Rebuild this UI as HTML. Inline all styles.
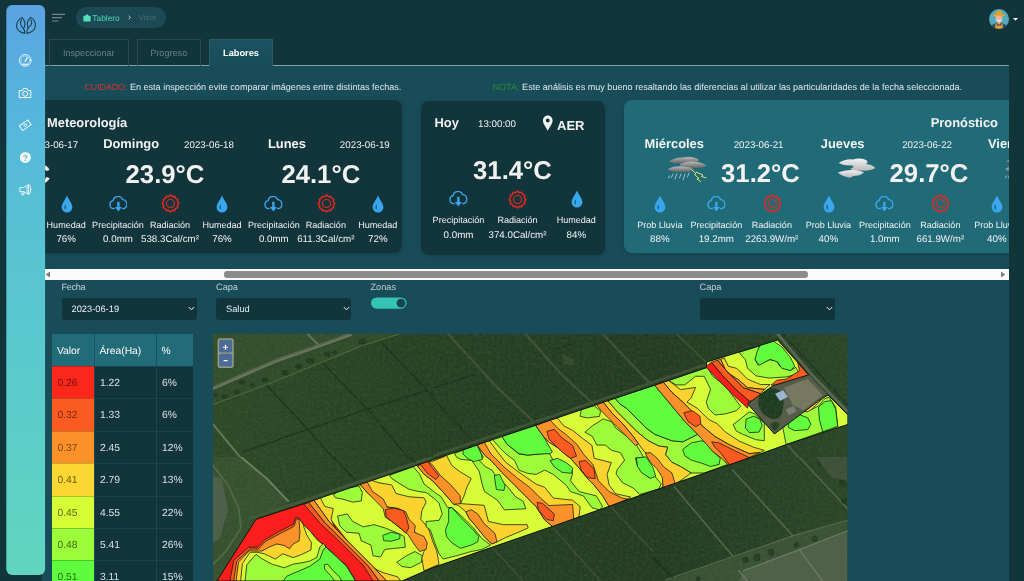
<!DOCTYPE html>
<html lang="es"><head><meta charset="utf-8"><title>Visor</title>
<style>
*{box-sizing:border-box;margin:0;padding:0}
html,body{width:1024px;height:581px;overflow:hidden}
body{background:#12353b;font-family:"Liberation Sans",sans-serif;color:#fff;position:relative;text-rendering:geometricPrecision}
#root{position:absolute;left:0;top:0;width:1024px;height:581px;overflow:hidden;will-change:transform}
.abs{position:absolute}
.t{position:absolute;white-space:nowrap;line-height:1;transform:translate(-50%,-50%)}
.tl{position:absolute;white-space:nowrap;line-height:1;transform:translate(0,-50%)}
.tr{position:absolute;white-space:nowrap;line-height:1;transform:translate(-100%,-50%)}
#side{left:0;top:0;z-index:20}
#panel{left:42px;top:66px;width:967px;height:520px;background:#184c59;overflow:hidden}
#panelline{left:45px;top:65px;width:964px;height:1px;background:linear-gradient(90deg,#86a1a4 0,#86a1a4 164px,transparent 164px,transparent 228px,#86a1a4 228px)}
.tab{top:39px;height:27px;border:1px solid #2b4a4e;border-bottom:none;font-size:9.15px;color:#668084}
.tab.on{background:linear-gradient(180deg,#1b5260,#184c59);border-color:#2c5b66;color:#fff;font-weight:bold;height:27px}
#crumb{left:76px;top:7px;width:90px;height:21px;border-radius:11px;background:#1b4a55}
.card{border-radius:8px;background:#12353b;overflow:hidden;box-shadow:0 1px 5px rgba(0,0,0,.16)}
.b{font-weight:bold}
.day{font-size:12.9px;font-weight:bold}
.date{font-size:9.75px}
.temp{font-size:25.7px;font-weight:bold}
.lab{font-size:9.05px}
.val{font-size:9.75px}
.wx{color:#f2f2f2}
.sel{height:22px;border-radius:3px;background:#12353b;font-size:9.3px;color:#e8eef0}
.flab{font-size:9.2px;color:#c3d0d3}
.th{background:#226b78}
.cell{font-size:10.3px;color:#d6e0e3}
</style></head>
<body>
<svg width="0" height="0" style="position:absolute">
<defs>
<symbol id="i-drop" viewBox="0 0 12 18">
<path d="M6 0.2 C7.2 4 11.4 8.2 11.4 12.2 A5.4 5.4 0 0 1 0.6 12.2 C0.6 8.2 4.8 4 6 0.2Z" fill="#3aa6ee"/>
<path d="M4.6 9.2 C3.2 11 2.9 13.6 4.4 14.6 C5 13 5 11 4.6 9.2Z" fill="#184c59" opacity=".85"/>
</symbol>
<symbol id="i-cloud" viewBox="0 0 20 17">
<path d="M5.7 13.5 H5.2 A4.3 4.3 0 0 1 4.4 5 A5.3 5.3 0 0 1 14.6 3.9 A4.9 4.9 0 0 1 15.4 13.5 H14.5" fill="none" stroke="#3aa6ee" stroke-width="1.4" stroke-linecap="round"/>
<path d="M10 6.2 V12.6" stroke="#3aa6ee" stroke-width="2.5" fill="none"/>
<path d="M6.2 11.7 H13.8 L10 16.6Z" fill="#3aa6ee"/>
</symbol>
<symbol id="i-sun" viewBox="-10 -10 20 20">
<path d="M0 -8.8 L2 -7.2 L4.4 -7.6 L5.4 -5.4 L7.6 -4.4 L7.2 -2 L8.8 0 L7.2 2 L7.6 4.4 L5.4 5.4 L4.4 7.6 L2 7.2 L0 8.8 L-2 7.2 L-4.4 7.6 L-5.4 5.4 L-7.6 4.4 L-7.2 2 L-8.8 0 L-7.2 -2 L-7.6 -4.4 L-5.4 -5.4 L-4.4 -7.6 L-2 -7.2Z" fill="none" stroke="#e5281f" stroke-width="1.6" stroke-linejoin="round"/>
<circle r="4.2" fill="none" stroke="#e5281f" stroke-width="1.15"/>
</symbol>
</defs>
</svg>

<div id="root">
<svg class="abs" id="side" width="50" height="581"><defs><linearGradient id="sg" x1="0" y1="0" x2="0" y2="1"><stop offset="0" stop-color="#5ba2e3"/><stop offset=".12" stop-color="#57b0de"/><stop offset=".25" stop-color="#56bad9"/><stop offset=".45" stop-color="#58c4d2"/><stop offset=".7" stop-color="#5bccca"/><stop offset="1" stop-color="#60d6c0"/></linearGradient></defs><rect x="6.3" y="5" width="38.8" height="570" rx="6" fill="url(#sg)"/></svg>
<svg class="abs" style="left:6px;top:5px;z-index:21" width="40" height="200" viewBox="6 5 40 200" fill="none" stroke="#f4fbfd" stroke-width="1" stroke-linecap="round" stroke-linejoin="round">
<g stroke="#1c4450" stroke-width="1.1">
<path d="M22 17.4 C18.2 19.6 16.2 23 16.6 26.6 C17 30 20 32.4 24.8 33.4 C24.9 31.6 24.6 30 23.6 28.8 C25.6 25 25 20.6 22 17.4Z"/>
<path d="M21.4 19.8 C19.8 22.6 20.4 26 23.6 28.8"/>
<path d="M30.8 17.4 C34.8 19.8 35.8 23.4 35.2 26.6 C34.6 30 31.6 32.4 26.8 33.4 C26.7 31.6 27 29.4 28.2 27.8 C26.6 24.4 27.6 20.2 30.8 17.4Z"/>
<path d="M31 19.8 C32.4 22.6 31.6 25.6 28.2 27.8"/>
</g>
<g stroke-width=".9">
<circle cx="25.2" cy="60.4" r="5.9"/>
<circle cx="25.2" cy="60.4" r="4.4" stroke-dasharray="0.7 1.6" stroke-width=".8"/>
<path d="M25 61.4 L27.4 57.6" stroke-width="1.1"/>
<path d="M22.6 64.2 H27.8" stroke-width="1"/>
</g>
<g stroke-width="1">
<path d="M19.6 90.6 H22.4 L23.4 88.6 H27 L28 90.6 H30.8 V97.6 H19.6Z"/>
<circle cx="25.2" cy="93.8" r="2.5"/>
</g>
<g stroke-width="1" transform="translate(25.2 125.3) rotate(-35)">
<path d="M-5.2 -2.8 H5.2 V2.8 H-5.2Z"/>
<circle cx="0" cy="0" r="1.3" stroke-width=".8"/>
</g>
<circle cx="25.3" cy="157.4" r="5.5" fill="#f4f8fa" stroke="none"/>
<g stroke-width=".85">
<path d="M20.2 187.6 H23.4 L28.6 184.6 V194.4 L23.4 191.6 H20.2Z"/>
<ellipse cx="28.8" cy="189.5" rx="1.9" ry="4.9"/>
<path d="M21.8 191.8 V195 H23.8 V191.8"/>
</g>
</svg>
<div class="t" style="left:25.4px;top:157.6px;z-index:22;font-size:8.5px;font-weight:bold;color:#5cb9d8">?</div>

<svg class="abs" style="left:50px;top:10px" width="18" height="14" viewBox="50 10 18 14"><path d="M52 14.3 H65 M52 17.65 H62 M52 21 H58.6" stroke="#74868a" stroke-width="1.15" fill="none"/></svg>
<div class="abs" id="crumb"></div>
<svg class="abs" style="left:82.5px;top:13.5px" width="8" height="8" viewBox="0 0 8 8"><path d="M2.6 1.8 V1.2 A.8 .8 0 0 1 3.4 .4 H4.6 A.8 .8 0 0 1 5.4 1.2 V1.8 H6.6 A1.1 1.1 0 0 1 7.7 2.9 V6.4 A1.1 1.1 0 0 1 6.6 7.5 H1.4 A1.1 1.1 0 0 1 .3 6.4 V2.9 A1.1 1.1 0 0 1 1.4 1.8Z" fill="#52e0b8"/></svg>
<div class="tl" style="left:92.3px;top:17.7px;font-size:8.4px;color:#4fd9b3">Tablero</div>
<svg class="abs" style="left:126.5px;top:14px" width="5" height="7" viewBox="0 0 5 7"><path d="M1.6 1.7 L3.4 3.5 L1.6 5.3" fill="none" stroke="#cfdadc" stroke-width=".9"/></svg>
<div class="tl" style="left:138.6px;top:17.7px;font-size:7.9px;color:#4e6a6e">Visor</div>
<svg class="abs" style="left:989px;top:9px" width="20" height="20" viewBox="0 0 20 20">
<defs><clipPath id="av"><circle cx="10" cy="10" r="10"/></clipPath></defs>
<g clip-path="url(#av)">
<rect width="20" height="20" fill="#55a9bd"/>
<path d="M2 20 C2 15.5 5 14 10 14 C15 14 18 15.5 18 20Z" fill="#2d4a63"/>
<path d="M6.2 14.6 V20 H13.8 V14.6 H12.4 V16.6 H7.6 V14.6Z" fill="#dca032"/>
<rect x="8.6" y="11" width="2.8" height="4.4" fill="#f0a57e"/>
<ellipse cx="10" cy="8.6" rx="3.4" ry="4" fill="#f3b08c"/>
<path d="M6.8 9 C7 12.4 8.4 13 10 13 C11.600 13 13 12.4 13.2 9 C12.6 10.800 11.600 11.200 10 11.200 C8.400 11.200 7.400 10.800 6.800 9Z" fill="#e8e4e0"/>
<path d="M3.6 6.200 C5.400 4.600 7 5.400 7.600 2.600 C8 1 12 1 12.400 2.600 C13 5.400 14.600 4.600 16.400 6.200 C15 7.600 12.400 6.800 10 6.800 C7.600 6.800 5 7.600 3.600 6.200Z" fill="#e0a236"/>
</g></svg>
<svg class="abs" style="left:1012.5px;top:17.5px" width="5" height="3" viewBox="0 0 5 3"><path d="M0 0 H5 L2.500 2.800Z" fill="#f4f6f7"/></svg>

<div class="abs" id="panel"></div><div class="abs" id="panelline"></div>
<div class="abs tab" style="left:49px;width:79.5px"><div class="t" style="left:50%;top:13.6px">Inspeccionar</div></div>
<div class="abs tab" style="left:136.5px;width:64.5px"><div class="t" style="left:50%;top:13.6px">Progreso</div></div>
<div class="abs tab on" style="left:209px;width:64px"><div class="t" style="left:50%;top:13.6px;font-size:9.250px">Labores</div></div>

<div class="abs" id="wxwrap" style="left:45px;top:66px;width:964px;height:200px;overflow:hidden"><div class="abs" style="left:-45px;top:-66px;width:1200px;height:300px"><div class="abs card" style="left:-60px;top:100px;width:462px;height:153px"></div><div class="tl day wx" style="left:47px;top:122.8px">Meteorología</div><div class="t day wx" style="left:-24.699999999999996px;top:143.75px">Sábado</div><div class="t date wx" style="left:53.2px;top:146.4px">2023-06-17</div><div class="t temp wx" style="left:10.800000000000002px;top:176.4px">23.5°C</div><svg class="abs" style="left:-47.199999999999996px;top:195.9px" width="18.8" height="16"><use href="#i-cloud"/></svg><div class="t lab wx" style="left:-37.8px;top:226.3px">Precipitación</div><div class="t val wx" style="left:-37.8px;top:239.5px">0.0mm</div><svg class="abs" style="left:4.900000000000002px;top:194.3px" width="19" height="19"><use href="#i-sun"/></svg><div class="t lab wx" style="left:14.200000000000003px;top:226.3px">Radiación</div><div class="t val wx" style="left:14.200000000000003px;top:239.5px">512.4Cal/cm²</div><svg class="abs" style="left:60.5px;top:194.6px" width="12" height="18"><use href="#i-drop"/></svg><div class="t lab wx" style="left:66.2px;top:226.3px">Humedad</div><div class="t val wx" style="left:66.2px;top:239.5px">76%</div><div class="t day wx" style="left:131.1px;top:143.75px">Domingo</div><div class="t date wx" style="left:209.0px;top:146.4px">2023-06-18</div><div class="t temp wx" style="left:165.0px;top:176.4px">23.9°C</div><svg class="abs" style="left:108.6px;top:195.9px" width="18.8" height="16"><use href="#i-cloud"/></svg><div class="t lab wx" style="left:118.0px;top:226.3px">Precipitación</div><div class="t val wx" style="left:118.0px;top:239.5px">0.0mm</div><svg class="abs" style="left:160.7px;top:194.3px" width="19" height="19"><use href="#i-sun"/></svg><div class="t lab wx" style="left:170.0px;top:226.3px">Radiación</div><div class="t val wx" style="left:170.0px;top:239.5px">538.3Cal/cm²</div><svg class="abs" style="left:216.3px;top:194.6px" width="12" height="18"><use href="#i-drop"/></svg><div class="t lab wx" style="left:222.0px;top:226.3px">Humedad</div><div class="t val wx" style="left:222.0px;top:239.5px">76%</div><div class="t day wx" style="left:286.90000000000003px;top:143.75px">Lunes</div><div class="t date wx" style="left:364.8px;top:146.4px">2023-06-19</div><div class="t temp wx" style="left:320.8px;top:176.4px">24.1°C</div><svg class="abs" style="left:264.40000000000003px;top:195.9px" width="18.8" height="16"><use href="#i-cloud"/></svg><div class="t lab wx" style="left:273.8px;top:226.3px">Precipitación</div><div class="t val wx" style="left:273.8px;top:239.5px">0.0mm</div><svg class="abs" style="left:316.5px;top:194.3px" width="19" height="19"><use href="#i-sun"/></svg><div class="t lab wx" style="left:325.8px;top:226.3px">Radiación</div><div class="t val wx" style="left:325.8px;top:239.5px">611.3Cal/cm²</div><svg class="abs" style="left:372.1px;top:194.6px" width="12" height="18"><use href="#i-drop"/></svg><div class="t lab wx" style="left:377.8px;top:226.3px">Humedad</div><div class="t val wx" style="left:377.8px;top:239.5px">72%</div><div class="abs card" style="left:421px;top:100.5px;width:184px;height:154.5px"></div><div class="tl day wx" style="left:434.5px;top:123px">Hoy</div><div class="tl date wx" style="left:478px;top:124.9px">13:00:00</div><svg class="abs" style="left:542.3px;top:115px" width="11.5" height="16.5" viewBox="0 0 11 16"><path d="M5.5 0.6 A4.7 4.7 0 0 1 10.2 5.3 C10.2 8.6 6.6 12.6 5.5 15.2 C4.4 12.6 0.8 8.6 0.8 5.3 A4.7 4.7 0 0 1 5.5 0.6Z M5.5 3.4 A1.9 1.9 0 0 0 5.5 7.2 A1.9 1.9 0 0 0 5.5 3.4Z" fill="#f2f2f2" fill-rule="evenodd"/></svg><div class="tl day wx" style="left:557px;top:125.1px;font-size:13px">AER</div><div class="t temp wx" style="left:512.5px;top:172.3px">31.4°C</div><svg class="abs" style="left:449.1px;top:191.4px" width="18.8" height="16"><use href="#i-cloud"/></svg><div class="t lab wx" style="left:458.5px;top:220.8px">Precipitación</div><div class="t val wx" style="left:458.5px;top:236.0px">0.0mm</div><svg class="abs" style="left:508.2px;top:189.8px" width="19" height="19"><use href="#i-sun"/></svg><div class="t lab wx" style="left:517.5px;top:220.8px">Radiación</div><div class="t val wx" style="left:517.5px;top:236.0px">374.0Cal/cm²</div><svg class="abs" style="left:570.5999999999999px;top:190.1px" width="12" height="18"><use href="#i-drop"/></svg><div class="t lab wx" style="left:576.3px;top:220.8px">Humedad</div><div class="t val wx" style="left:576.3px;top:236.0px">84%</div><div class="abs card" style="left:624px;top:100px;width:500px;height:153px;background:#216b78"></div><div class="tr day wx" style="left:998px;top:123px">Pronóstico</div><svg class="abs" style="left:664px;top:152px" width="48" height="34" viewBox="664 152 48 34">
<defs><filter id="wb" x="-20%" y="-20%" width="140%" height="140%"><feGaussianBlur stdDeviation=".7"/></filter>
<linearGradient id="gc" x1="0" y1="0" x2="0" y2="1"><stop offset="0" stop-color="#b9b9b9"/><stop offset="1" stop-color="#5f6264"/></linearGradient>
<linearGradient id="wc" x1="0" y1="0" x2="0" y2="1"><stop offset="0" stop-color="#f2f2f2"/><stop offset="1" stop-color="#b9b9b9"/></linearGradient></defs>
<g filter="url(#wb)" id="storm">
<path d="M669 161.5 Q676 157 683 157.5 Q690 155.5 697 158.5 Q700 160 698 162 Q690 164.5 682 163.5 Q674 164 669 161.5Z" fill="url(#gc)"/>
<path d="M680 164 Q688 160.5 697 162 Q703 162.5 706.5 165.5 Q703 168.5 694 168 Q685 168.5 680 166Z" fill="url(#gc)"/>
<path d="M668.5 168.5 Q675 165.5 684 166.5 Q691 167 694 169.5 Q690 172.5 681 172 Q673 172.5 668.5 170Z" fill="url(#gc)"/>
<g stroke="#c6d8e6" stroke-width=".9" stroke-linecap="round" opacity=".85"><path d="M673 174 L671.5 177.5 M677 173.5 L675 179 M681 174 L679.5 178 M685 174 L683 180 M689 173 L687.5 177 M669.5 176 L668.5 178"/></g>
<path d="M692 170 L696 173.5 L694.5 174.5 L699 178.5 L697 179 L701 182 M696 172 L703 175 L701.5 176.5 L706.5 178" stroke="#e6e070" stroke-width="1" fill="none" stroke-linejoin="round"/>
</g>
</svg>
<svg class="abs" style="left:833px;top:153px" width="48" height="30" viewBox="833 153 48 30">
<g filter="url(#wb)">
<path d="M838.5 163 Q846 158.5 853 159.5 Q860 157.5 866 160 Q869 162 866 164 Q872 164.5 875.5 168 Q870 171.5 862 170.5 Q855 171.5 850 169 Q856 166.5 852 165.5 Q844 166 838.5 163Z" fill="url(#wc)"/>
<path d="M838 172.5 Q845 169.5 853 170 Q860 170.5 864 172.5 Q860 176 853 176 Q851 178.5 847 177 Q841 175.5 838 172.5Z" fill="url(#wc)"/>
</g>
</svg>
<svg class="abs" style="left:1001px;top:152px" width="48" height="34" viewBox="664 152 48 34"><use href="#storm"/></svg>
<div class="t day wx" style="left:674.2px;top:143.5px">Miércoles</div><div class="tr date wx" style="left:783.5px;top:145.7px">2023-06-21</div><div class="t temp wx" style="left:760.5px;top:174.6px">31.2°C</div><svg class="abs" style="left:654.0999999999999px;top:194.6px" width="12" height="18"><use href="#i-drop"/></svg><div class="t lab wx" style="left:659.8px;top:226.3px">Prob Lluvia</div><div class="t val wx" style="left:659.8px;top:239.5px">88%</div><svg class="abs" style="left:706.9px;top:195.9px" width="18.8" height="16"><use href="#i-cloud"/></svg><div class="t lab wx" style="left:716.3px;top:226.3px">Precipitación</div><div class="t val wx" style="left:716.3px;top:239.5px">19.2mm</div><svg class="abs" style="left:762.5px;top:194.3px" width="19" height="19"><use href="#i-sun"/></svg><div class="t lab wx" style="left:771.8px;top:226.3px">Radiación</div><div class="t val wx" style="left:771.8px;top:239.5px">2263.9W/m²</div><div class="t day wx" style="left:842.7px;top:143.5px">Jueves</div><div class="tr date wx" style="left:952.0px;top:145.7px">2023-06-22</div><div class="t temp wx" style="left:929.0px;top:174.6px">29.7°C</div><svg class="abs" style="left:822.5999999999999px;top:194.6px" width="12" height="18"><use href="#i-drop"/></svg><div class="t lab wx" style="left:828.3px;top:226.3px">Prob Lluvia</div><div class="t val wx" style="left:828.3px;top:239.5px">40%</div><svg class="abs" style="left:875.4px;top:195.9px" width="18.8" height="16"><use href="#i-cloud"/></svg><div class="t lab wx" style="left:884.8px;top:226.3px">Precipitación</div><div class="t val wx" style="left:884.8px;top:239.5px">1.0mm</div><svg class="abs" style="left:931.0px;top:194.3px" width="19" height="19"><use href="#i-sun"/></svg><div class="t lab wx" style="left:940.3px;top:226.3px">Radiación</div><div class="t val wx" style="left:940.3px;top:239.5px">661.9W/m²</div><div class="t day wx" style="left:1011.2px;top:143.5px">Viernes</div><div class="tr date wx" style="left:1120.5px;top:145.7px">2023-06-23</div><div class="t temp wx" style="left:1097.5px;top:174.6px">28.4°C</div><svg class="abs" style="left:991.0999999999999px;top:194.6px" width="12" height="18"><use href="#i-drop"/></svg><div class="t lab wx" style="left:996.8px;top:226.3px">Prob Lluvia</div><div class="t val wx" style="left:996.8px;top:239.5px">40%</div><svg class="abs" style="left:1043.8999999999999px;top:195.9px" width="18.8" height="16"><use href="#i-cloud"/></svg><div class="t lab wx" style="left:1053.3px;top:226.3px">Precipitación</div><div class="t val wx" style="left:1053.3px;top:239.5px">0.5mm</div><svg class="abs" style="left:1099.5px;top:194.3px" width="19" height="19"><use href="#i-sun"/></svg><div class="t lab wx" style="left:1108.8px;top:226.3px">Radiación</div><div class="t val wx" style="left:1108.8px;top:239.5px">702.1W/m²</div></div></div>
<div class="tl note" style="left:84.5px;top:88.4px;font-size:9.080px;color:#dfe8ea"><span style="color:#d9342c;font-size:8.77px">CUIDADO:</span> En esta inspección evite comparar imágenes entre distintas fechas.</div>
<div class="tl note" style="left:492.5px;top:88.4px;font-size:9.080px;color:#dfe8ea"><span style="color:#2b8c31">NOTA:</span> Este análisis es muy bueno resaltando las diferencias al utilizar las particularidades de la fecha seleccionada.</div>

<div class="abs" style="left:45px;top:269px;width:964px;height:11px;background:#fafafa"></div>
<div class="abs" style="left:224px;top:271px;width:584px;height:6.5px;border-radius:3.2px;background:#8b8b8b"></div>
<svg class="abs" style="left:45px;top:270.5px" width="6" height="7" viewBox="0 0 6 7"><path d="M5 0.500 V6.500 L0.800 3.500Z" fill="#7b7b7b"/></svg>
<svg class="abs" style="left:999.5px;top:270.5px" width="6" height="7" viewBox="0 0 6 7"><path d="M1 0.500 V6.500 L5.200 3.500Z" fill="#7b7b7b"/></svg>

<div class="tl flab" style="left:61.5px;top:287.8px;letter-spacing:-.35px">Fecha</div>
<div class="tl flab" style="left:216px;top:287.8px">Capa</div>
<div class="tl flab" style="left:370.5px;top:287.8px">Zonas</div>
<div class="tl flab" style="left:699.5px;top:287.8px">Capa</div>
<div class="abs sel" style="left:61.5px;top:298px;width:135px"><div class="tl" style="left:10px;top:11.95px">2023-06-19</div><svg class="abs" style="right:1.2px;top:8px" width="7" height="5" viewBox="0 0 7 5"><path d="M.800 1 L3.500 3.800 L6.200 1" fill="none" stroke="#f0f4f5" stroke-width="1"/></svg></div>
<div class="abs sel" style="left:216px;top:298px;width:135px"><div class="tl" style="left:10px;top:11.95px">Salud</div><svg class="abs" style="right:1.2px;top:8px" width="7" height="5" viewBox="0 0 7 5"><path d="M.800 1 L3.500 3.800 L6.200 1" fill="none" stroke="#f0f4f5" stroke-width="1"/></svg></div>
<div class="abs sel" style="left:699.5px;top:298px;width:135px"><svg class="abs" style="right:1.2px;top:8px" width="7" height="5" viewBox="0 0 7 5"><path d="M.800 1 L3.500 3.800 L6.200 1" fill="none" stroke="#f0f4f5" stroke-width="1"/></svg></div>
<svg class="abs" style="left:368px;top:295px" width="42" height="16" viewBox="368 295 42 16"><rect x="371" y="297.4" width="35.6" height="11.3" rx="5.65" fill="#33c4b5"/><circle cx="401" cy="303.05" r="4.4" fill="#174651"/></svg>

<div class="abs th" style="left:52px;top:334px;width:141px;height:32px"></div>
<div class="abs" style="left:52px;top:366px;width:141px;height:230px;background:#12353b"></div>
<div class="tl cell" style="left:57px;top:351.5px;color:#fff">Valor</div><div class="tl cell" style="left:99.5px;top:351.5px;color:#fff">Área(Ha)</div><div class="tl cell" style="left:161.5px;top:351.5px;color:#fff">%</div>
<div class="abs" style="left:52px;top:366.0px;width:42px;height:32.4px;background:#f9281b;border-top:1px solid rgba(0,0,0,.22)"></div><div class="tl cell" style="left:57.5px;top:383.9px;color:#7a1010">0.26</div><div class="tl cell" style="left:100px;top:383.9px">1.22</div><div class="tl cell" style="left:162px;top:383.9px">6%</div>
<div class="abs" style="left:94px;top:366.0px;width:99px;height:1px;background:#1a424c"></div>
<div class="abs" style="left:52px;top:398.4px;width:42px;height:32.4px;background:#fb5a21;border-top:1px solid rgba(0,0,0,.22)"></div><div class="tl cell" style="left:57.5px;top:416.3px;color:#7a2a10">0.32</div><div class="tl cell" style="left:100px;top:416.3px">1.33</div><div class="tl cell" style="left:162px;top:416.3px">6%</div>
<div class="abs" style="left:94px;top:398.4px;width:99px;height:1px;background:#1a424c"></div>
<div class="abs" style="left:52px;top:430.8px;width:42px;height:32.4px;background:#fb9229;border-top:1px solid rgba(0,0,0,.22)"></div><div class="tl cell" style="left:57.5px;top:448.7px;color:#7a4410">0.37</div><div class="tl cell" style="left:100px;top:448.7px">2.45</div><div class="tl cell" style="left:162px;top:448.7px">12%</div>
<div class="abs" style="left:94px;top:430.8px;width:99px;height:1px;background:#1a424c"></div>
<div class="abs" style="left:52px;top:463.2px;width:42px;height:32.4px;background:#fcd631;border-top:1px solid rgba(0,0,0,.22)"></div><div class="tl cell" style="left:57.5px;top:481.1px;color:#6e5a10">0.41</div><div class="tl cell" style="left:100px;top:481.1px">2.79</div><div class="tl cell" style="left:162px;top:481.1px">13%</div>
<div class="abs" style="left:94px;top:463.2px;width:99px;height:1px;background:#1a424c"></div>
<div class="abs" style="left:52px;top:495.6px;width:42px;height:32.4px;background:#d6fc36;border-top:1px solid rgba(0,0,0,.22)"></div><div class="tl cell" style="left:57.5px;top:513.5px;color:#5a6a14">0.45</div><div class="tl cell" style="left:100px;top:513.5px">4.55</div><div class="tl cell" style="left:162px;top:513.5px">22%</div>
<div class="abs" style="left:94px;top:495.6px;width:99px;height:1px;background:#1a424c"></div>
<div class="abs" style="left:52px;top:528.0px;width:42px;height:32.4px;background:#9cfc3a;border-top:1px solid rgba(0,0,0,.22)"></div><div class="tl cell" style="left:57.5px;top:545.9px;color:#3f6a18">0.48</div><div class="tl cell" style="left:100px;top:545.9px">5.41</div><div class="tl cell" style="left:162px;top:545.9px">26%</div>
<div class="abs" style="left:94px;top:528.0px;width:99px;height:1px;background:#1a424c"></div>
<div class="abs" style="left:52px;top:560.4px;width:42px;height:32.4px;background:#5ffc3e;border-top:1px solid rgba(0,0,0,.22)"></div><div class="tl cell" style="left:57.5px;top:578.3px;color:#2a6a1c">0.51</div><div class="tl cell" style="left:100px;top:578.3px">3.11</div><div class="tl cell" style="left:162px;top:578.3px">15%</div>
<div class="abs" style="left:94px;top:560.4px;width:99px;height:1px;background:#1a424c"></div>
<div class="abs" style="left:94px;top:334px;width:1px;height:260px;background:#1c4e5a;opacity:.8"></div><div class="abs" style="left:156px;top:334px;width:1px;height:260px;background:#1c4e5a;opacity:.8"></div>

<svg class="abs" style="left:213px;top:334px" width="635" height="247" viewBox="213 334 635 247">
<defs>
<clipPath id="strip"><path id="stripP" d="M216.9 581 L256 519.3 L303.2 503.8 L433 459.8 L653 385.6 L706.5 367.6 L706.5 362.2 L777.6 340 L808.8 374.8 L773.3 385.6 L747.5 403.8 L774.4 433.9 L824.9 396.3 L828.1 395.2 L848 414.9 L848 424.4 L786.2 444.6 L751.8 457 L653 490.8 L551.2 526.8 L433 567.6 L402 581Z"/></clipPath>
<clipPath id="tA"><rect x="0" y="0" width="1024" height="578"/></clipPath>
<filter id="grain" x="0" y="0" width="100%" height="100%"><feTurbulence type="fractalNoise" baseFrequency="0.35" numOctaves="2" seed="3"/><feColorMatrix values="0 0 0 0 0.1  0 0 0 0 0.2  0 0 0 0 0.08  0.9 0.9 0 0 -0.62"/></filter>
<linearGradient id="bgG" x1="0" y1="0" x2="1" y2="0"><stop offset="0" stop-color="#2b4826"/><stop offset=".35" stop-color="#253e22"/><stop offset=".7" stop-color="#223a20"/><stop offset="1" stop-color="#2a4427"/></linearGradient></defs>
<rect x="213" y="334" width="635" height="247" fill="url(#bgG)"/>
<!-- satellite background : tile A -->
<g transform="translate(213 334) scale(0.21484)" clip-path="url(#tA)" fill="none" stroke-linecap="round">
<path d="M0 0 H640 L480 60 L300 120 L120 200 L0 250Z" fill="#324d2b" stroke="none"/>
<path d="M0 335 L250 235 L510 125 L700 48 L860 0 H640 L480 60 L300 120 L120 200 L0 255Z" fill="#304a29" stroke="none"/>
<path d="M0 252 L120 200 L300 122 L480 60 L640 2" stroke="#5d684f" stroke-width="17"/>
<path d="M0 256 L120 204 L300 126 L480 64 L640 6" stroke="#737c66" stroke-width="5"/>
<path d="M440 0 L490 50" stroke="#66705a" stroke-width="9"/>
<path d="M0 328 L250 236 L510 130 L700 52 L870 0" stroke="#4a6238" stroke-width="6"/>
<g fill="#1d341c" stroke="none" opacity=".8"><ellipse cx="55" cy="292" rx="17" ry="11"/><ellipse cx="110" cy="270" rx="15" ry="11"/><ellipse cx="135" cy="225" rx="15" ry="11"/><ellipse cx="240" cy="213" rx="18" ry="12"/><ellipse cx="335" cy="180" rx="18" ry="12"/><ellipse cx="398" cy="150" rx="16" ry="12"/><ellipse cx="452" cy="125" rx="20" ry="13"/><ellipse cx="532" cy="95" rx="15" ry="11"/><ellipse cx="568" cy="85" rx="12" ry="9"/><ellipse cx="695" cy="35" rx="20" ry="14"/><ellipse cx="12" cy="282" rx="12" ry="9"/><ellipse cx="185" cy="240" rx="14" ry="10"/></g>
<g stroke="#1a2f19" stroke-width="6"><path d="M250 240 L420 420 L560 578"/><path d="M510 135 L720 350 L910 578"/><path d="M780 35 L1000 265 L1024 292"/><path d="M140 548 L450 442 L700 355 L1000 262"/></g>
<path d="M0 420 L130 578" stroke="#66765a" stroke-width="9"/>
</g>
<!-- tile C -->
<g transform="translate(433 334) scale(0.21484)" clip-path="url(#tA)" fill="none" stroke-linecap="round">


<g stroke="#3c5035" stroke-width="11"><path d="M70 0 L300 250 L460 400"/><path d="M430 0 L600 190 L740 320"/><path d="M790 0 L1010 230"/></g>
<g stroke="#1a2f19" stroke-width="5"><path d="M0 250 L190 190"/><path d="M0 300 L180 490"/><path d="M560 70 L640 50"/></g>
<path d="M600 90 L660 120 L650 145 L610 140Z" fill="#34492c" stroke="none"/>
<path d="M-10 571 L1034 222" stroke="#3c5235" stroke-width="12"/>
</g>
<!-- tile B (upper-left part is background) -->
<g transform="translate(213 457) scale(0.21484)" clip-path="url(#tA)" fill="none" stroke-linecap="round">

<path d="M0 0 H130 L360 205 L200 290 L18 578 H0Z" fill="#35502e" stroke="none"/>
<path d="M0 90 L40 100 L70 250 L30 380 L0 400Z" fill="#4d5e4a" stroke="none"/>
<path d="M0 40 L70 130 L120 240 L130 330 L60 440 L0 500" stroke="#526548" stroke-width="9"/>
<path d="M130 0 L250 100 L350 205" stroke="#708060" stroke-width="9"/>
<path d="M170 285 L420 205 L1024 0" stroke="#3f5636" stroke-width="14"/>
<path d="M560 0 L660 105" stroke="#1a2f19" stroke-width="6"/>
<path d="M910 0 L940 25" stroke="#1a2f19" stroke-width="6"/>
</g>
<!-- tile D -->
<g transform="translate(433 457) scale(0.21484)" clip-path="url(#tA)" fill="none" stroke-linecap="round">

<g stroke="#3a4c36" stroke-width="7"><path d="M280 425 L420 578"/><path d="M560 330 L780 578"/><path d="M830 235 L1024 440"/><path d="M0 540 L40 578"/></g>

</g>
<!-- tile F -->
<g transform="translate(653 457) scale(0.21484)" clip-path="url(#tA)" fill="none" stroke-linecap="round">


<path d="M60 578 L370 470 L650 372 L905 300 V578Z" fill="#395134" stroke="none"/>
<path d="M400 578 L420 535 L660 445 L905 350 V578Z" fill="#4f5f49" stroke="none"/>
<g stroke="#56664a" stroke-width="7"><path d="M100 140 L370 460"/><path d="M370 60 L650 365"/><path d="M680 0 L905 240"/><path d="M60 572 L370 465 L650 368 L905 295"/></g>
<g stroke="#6c7962" stroke-width="7"><path d="M680 430 L790 578"/><path d="M400 530 L440 578"/><path d="M420 530 L660 440 L905 345"/></g>
<g fill="#1d341c" stroke="none" opacity=".75"><circle cx="430" cy="480" r="16"/><circle cx="485" cy="468" r="17"/><circle cx="550" cy="445" r="17"/><circle cx="668" cy="410" r="13"/><circle cx="752" cy="380" r="14"/><circle cx="210" cy="568" r="12"/><circle cx="780" cy="25" r="16"/><circle cx="880" cy="120" r="16"/><circle cx="890" cy="205" r="14"/></g>
<path d="M760 0 H905 V110 L830 95Z" fill="#3d4f38" stroke="none"/>
<path d="M0 470 L90 560" stroke="#16281a" stroke-width="6"/>
</g>
<!-- tile E -->
<g transform="translate(653 334) scale(0.21484)" clip-path="url(#tA)" fill="none" stroke-linecap="round">


<path d="M110 0 L250 135" stroke="#3b5433" stroke-width="7"/>
<path d="M-10 229 L250 141" stroke="#3c5235" stroke-width="12"/>
<path d="M580 0 L740 190 L905 360" stroke="#5b6552" stroke-width="13"/>
<path d="M605 0 L905 330" stroke="#1c2d1b" stroke-width="5"/>
<path d="M440 325 L560 238 L725 190 L815 285 L800 292 L565 465Z" fill="#565a4a" stroke="none"/>
<path d="M610 250 L720 210 L790 285 L700 355 L650 330Z" fill="#7a7863" stroke="none"/>
<path d="M500 270 Q540 235 590 262 Q620 300 600 370 Q580 410 540 390 Q485 360 490 310Z" fill="#1d3a1d" stroke="none"/>
<path d="M545 420 Q575 395 590 420 Q580 450 560 450Z" fill="#24401f" stroke="none"/>
<path d="M568 278 L605 262 L628 292 L592 312Z" fill="#a3b9da" stroke="none"/>
<path d="M618 352 L655 335 L668 360 L632 378Z" fill="#7d8178" stroke="none"/>
<path d="M630 520 L680 578" stroke="#4a5a40" stroke-width="10"/>
</g>
<rect x="213" y="334" width="635" height="247" filter="url(#grain)" opacity=".3"/>
<style>
.z path,.z polygon{stroke:#10180c;stroke-width:.75;vector-effect:non-scaling-stroke;stroke-linejoin:round}
.c0{fill:#fc1d1d}.c1{fill:#fb5a21}.c2{fill:#fb9229}.c3{fill:#fbd32f}.c4{fill:#d9fc38}.c5{fill:#9dfb3b}.c6{fill:#62fb3d}
</style>
<use href="#stripP" fill="#d9fc38"/>
<g class="z" clip-path="url(#strip)">
<!-- V1 origin (213,457) -->
<g transform="translate(213 457) scale(0.21484)">
<g transform="scale(4.6545) translate(0 38) scale(0.14843)">
<polygon class="c0" points="-40,680 290,160 610,60 700,50 1200,680"/>
<polygon class="c1" points="110,640 118,560 140,440 240,352 300,352 350,300 450,243 540,198 558,150 580,160 610,200 655,245 700,300 760,350 825,410 900,480 960,579 990,630"/>
<polygon class="c2" points="135,640 142,560 160,445 250,363 305,365 355,312 455,258 545,212 562,163 580,160 610,200 655,245 700,300 760,350 825,410 900,480 960,579 990,630"/>
<polygon class="c3" points="150,640 158,560 172,452 245,376 300,378 330,377 380,350 430,330 480,340 515,362 540,330 580,310 586,250 580,178 580,160 610,200 655,245 700,300 760,350 825,410 900,480 960,579 990,630"/>
<polygon class="c4" points="182,640 188,560 198,462 250,386 300,386 345,396 420,432 470,396 540,422 600,400 660,370 663,320 632,270 612,215 610,200 655,245 700,300 760,350 825,410 900,480 960,579 990,630"/>
<polygon class="c5" points="212,640 218,560 228,470 290,400 330,430 400,467 480,490 540,466 600,456 650,446 700,420 720,350 745,326 760,350 825,410 900,480 960,579 990,630"/>
<polygon class="c6" points="450,640 470,585 495,548 560,520 650,482 720,432 742,372 760,350 825,410 900,480 960,579 990,630"/>
<polygon class="c5" points="750,470 772,465 800,500 850,550 875,590 830,590 790,540 752,500"/>
</g>
<polygon class="c3" points="470,202 500,190 520,230 560,240 550,290 580,355 650,445 700,495 790,538 860,558 890,600 830,600 740,505 690,455 620,385 540,300"/>
<polygon class="c2" points="445,212 470,202 540,300 620,385 690,455 740,505 830,600 790,600 720,505 670,455 600,385 520,305"/>
<polygon class="c1" points="423,220 445,212 520,305 600,385 670,455 720,505 790,600 760,600 700,505 650,455 580,385 500,310"/>
<polygon class="c5" points="560,175 600,150 680,135 695,165 690,205 650,210 600,195 570,190"/>
<polygon class="c5" points="580,275 625,265 650,300 700,325 750,315 800,330 850,350 890,370 895,420 850,425 800,430 780,465 745,460 735,410 690,390 680,355 620,350 590,320"/>
<polygon class="c6" points="790,365 830,350 870,360 870,380 830,392 795,390"/>
<polygon class="c5" points="855,490 900,460 940,440 975,460 970,490 920,515 880,510"/>
</g>
<!-- V2 origin (323,457) -->
<g transform="translate(323 457) scale(0.21484)">
<polygon class="c3" points="170,125 215,105 260,120 320,130 340,170 400,185 470,190 480,210 460,250 455,290 490,330 510,390 530,440 540,500 470,530 460,470 470,440 480,400 450,370 420,340 400,300 380,260 350,240 290,230 250,200 210,170"/>
<polygon class="c2" points="170,125 205,115 230,160 280,195 300,235 350,240 385,255 400,290 430,320 425,350 470,370 485,400 480,430 450,440 420,400 395,360 370,340 320,300 290,280 280,240 250,210 210,170"/>
<polygon class="c1" points="290,245 330,238 375,250 390,290 400,330 385,355 360,330 320,300 295,280"/>
<polygon class="c3" points="505,22 560,0 575,-8 600,40 640,70 690,100 670,140 655,185 640,217 750,225 770,300 840,315 950,315 955,330 910,350 850,375 810,395 785,405 750,370 710,320 680,285 665,255 630,225 608,220 565,170 515,115 468,78 440,42 488,18"/>
<polygon class="c2" points="440,42 488,18 512,40 545,85 595,130 638,180 640,217 608,220 565,170 515,115 468,78"/>
<polygon class="c1" points="450,30 485,18 505,45 540,88 525,105 485,75"/>
<polygon class="c2" points="665,255 690,245 720,265 750,310 800,355 810,395 785,405 750,370 710,320 680,285"/>
<polygon class="c5" points="310,85 420,45 450,80 470,125 520,165 550,185 580,235 600,235 640,270 700,330 740,380 780,410 740,430 690,440 620,460 560,475 540,450 520,400 500,340 480,325 480,300 540,295 555,265 540,215 520,195 480,165 440,160 400,150 350,120 320,100"/>
<polygon class="c6" points="585,240 600,235 640,280 700,340 725,370 720,395 690,410 640,425 600,400 575,370 570,340 585,300"/>
</g>
<!-- V3 origin (433,396) -->
<g transform="translate(433 396) scale(0.21484)">
<polygon class="c5" points="100,268 140,252 205,228 225,270 235,285 215,300 245,330 275,345 300,385 345,420 385,470 420,490 432,525 332,530 300,485 240,445 230,415 215,350 180,300 130,295 110,285"/>
<polygon class="c6" points="140,252 205,228 225,270 230,295 190,305 160,290 140,270"/>
<polygon class="c6" points="285,370 310,365 335,415 330,440 295,435"/>
<polygon class="c3" points="238,215 262,208 300,260 340,310 400,355 480,410 520,425 560,475 650,485 685,515 680,560 655,580 560,610 520,577 480,515 430,465 380,415 320,355 270,300 240,275 205,228"/>
<polygon class="c2" points="205,228 238,215 270,270 330,330 390,380 450,425 500,475 540,510 650,505 655,577 560,610 520,577 480,515 430,465 380,415 320,355 270,300 240,275"/>
<polygon class="c1" points="485,495 510,500 565,550 560,580 530,575 490,530"/>
<polygon class="c5" points="275,200 320,185 345,225 400,270 440,275 500,270 540,265 560,300 600,330 645,335 650,360 640,395 680,445 760,465 790,515 775,530 740,520 700,465 640,445 620,415 560,365 520,345 480,365 440,360 400,345 380,300 340,270 310,240"/>
<polygon class="c6" points="320,187 478,137 510,180 530,215 555,260 545,268 500,270 440,275 400,268 345,225"/>
<polygon class="c6" points="545,300 580,290 620,310 650,335 645,360 600,355 565,330"/>
<polygon class="c3" points="545,112 578,102 610,140 650,160 700,200 740,230 750,290 830,310 810,365 820,415 850,455 920,470 905,480 820,515 790,465 750,415 720,385 680,335 640,290 580,240 540,215 515,190 478,137"/>
<polygon class="c2" points="478,137 545,112 580,150 620,180 670,225 700,270 745,320 770,395 820,445 880,475 905,480 820,515 790,465 750,415 720,385 680,335 640,290 580,240 540,215 515,190"/>
<polygon class="c1" points="530,165 565,155 600,195 650,230 668,280 640,290 600,260 565,225 540,200"/>
<polygon class="c1" points="680,305 710,300 750,340 755,385 720,380 690,345"/>
<polygon class="c5" points="690,62 750,45 780,70 775,95 720,102 685,95"/>
</g>
<!-- V4 origin (543,372) -->
<g transform="translate(543 372) scale(0.21484)">
<polygon class="c5" points="195,280 230,250 260,232 280,218 320,232 340,262 390,300 430,330 470,400 430,400 440,440 490,490 520,485 550,520 540,545 450,570 420,540 370,515 340,475 345,455 380,410 360,375 320,365 290,340 250,340 230,300"/>
<polygon class="c6" points="435,400 480,395 510,440 525,485 500,495 460,470 440,440"/>
<polygon class="c5" points="300,132 335,122 360,150 390,170 440,220 480,260 520,290 600,320 650,325 700,300 720,290 740,310 760,315 800,360 860,430 750,470 690,470 640,440 600,420 570,385 580,350 540,345 490,320 440,280 390,230 350,190"/>
<polygon class="c3" points="280,140 300,132 350,190 390,230 440,280 490,320 540,345 580,350 570,385 600,420 640,440 690,470 620,520 560,545 555,470 530,430 500,385 475,375 445,335 420,300 370,240 320,190"/>
<polygon class="c2" points="245,148 280,140 320,190 370,240 420,300 445,335 430,342 380,290 330,240 280,190"/>
<polygon class="c2" points="475,378 500,375 530,400 560,440 600,470 615,520 560,545 555,490 530,450 500,420"/>
<polygon class="c6" points="335,122 520,62 560,110 610,170 660,230 700,270 720,290 700,300 650,325 600,320 520,290 480,260 440,220 390,170 360,150"/>
<polygon class="c6" points="650,360 690,330 740,320 770,335 790,370 825,400 820,430 780,440 740,425 690,410 660,390"/>
<polygon class="c3" points="560,48 585,40 640,82 710,72 690,120 670,140 720,170 770,220 810,240 850,280 910,320 980,350 1030,365 1010,375 960,380 870,340 800,300 740,250 700,190 640,130 600,95"/>
<polygon class="c2" points="520,62 560,48 600,95 640,130 700,190 740,250 800,300 870,340 960,380 1010,375 960,398 865,435 830,400 790,370 760,335 720,290 700,270 660,230 610,170 560,110"/>
<polygon class="c1" points="655,190 695,180 730,205 735,240 710,255 675,230"/>
<polygon class="c1" points="785,325 820,330 890,365 960,398 870,435 830,380 800,350"/>
<polygon class="c5" points="585,40 765,-22 790,20 830,50 860,80 890,120 920,160 900,180 850,195 800,200 770,170 760,140 780,80 750,20 710,20 660,60 620,60"/>
<polygon class="c5" points="885,245 930,210 960,185 985,195 1030,240 1030,320 990,315 930,290 900,275"/>
<polygon class="c6" points="945,220 980,205 1010,220 1020,250 1005,280 960,282 942,260"/>
</g>
<!-- V5 origin (653,334) -->
<g transform="translate(653 334) scale(0.21484)">
<polygon class="c3" points="315,118 332,112 350,150 390,160 440,210 500,235 545,235 520,258 440,250 400,215 340,175"/>
<polygon class="c2" points="300,122 315,118 340,175 400,215 440,250 520,258 500,278 420,250 350,180"/>
<polygon class="c1" points="272,132 300,122 350,180 420,250 500,278 480,312 448,312 392,265 325,195"/>
<polygon class="c0" points="245,152 272,132 325,195 392,265 448,312 440,345 380,290 300,210"/>
<polygon class="c5" points="400,85 500,55 490,80 475,120 490,145 540,120 575,125 590,150 640,170 665,155 680,185 620,200 540,205 480,195 440,160 430,120"/>
<polygon class="c6" points="500,50 560,32 600,60 640,110 660,150 640,170 600,160 580,130 545,118 495,145 475,120 485,80"/>
<polygon class="c1" points="550,237 576,215 620,210 682,171 673,131 726,194 620,244 594,240"/>
<polygon class="c5" points="605,440 640,390 690,365 740,350 770,335 800,300 820,295 850,340 860,430 620,515"/>
<polygon class="c3" points="700,360 760,300 812,285 790,300 740,350 720,362"/>
<polygon class="c6" points="770,340 800,315 830,310 850,350 860,430 790,455 775,400"/>
<polygon class="c6" points="630,400 680,375 720,390 735,420 720,445 660,450 630,435"/>
</g>
</g>
<use href="#stripP" fill="none" stroke="#0c120a" stroke-width="1"/>
<!-- zoom control -->
<rect x="217.6" y="338.2" width="16.1" height="29.7" rx="2.6" fill="#a3ab93" opacity=".85"/>
<rect x="219.1" y="339.7" width="13.1" height="12.7" rx="1.6" fill="#4b6b99"/>
<rect x="219.1" y="353.7" width="13.1" height="12.7" rx="1.6" fill="#4b6b99"/>
<path d="M223 347.2 H228 M225.5 344.7 V349.7 M223.6 360.6 H227.6" stroke="#fff" stroke-width="1.15" fill="none"/>
<rect x="847.6" y="334" width=".5" height="247" fill="#184c59"/>
</svg>

</div>
</body></html>
